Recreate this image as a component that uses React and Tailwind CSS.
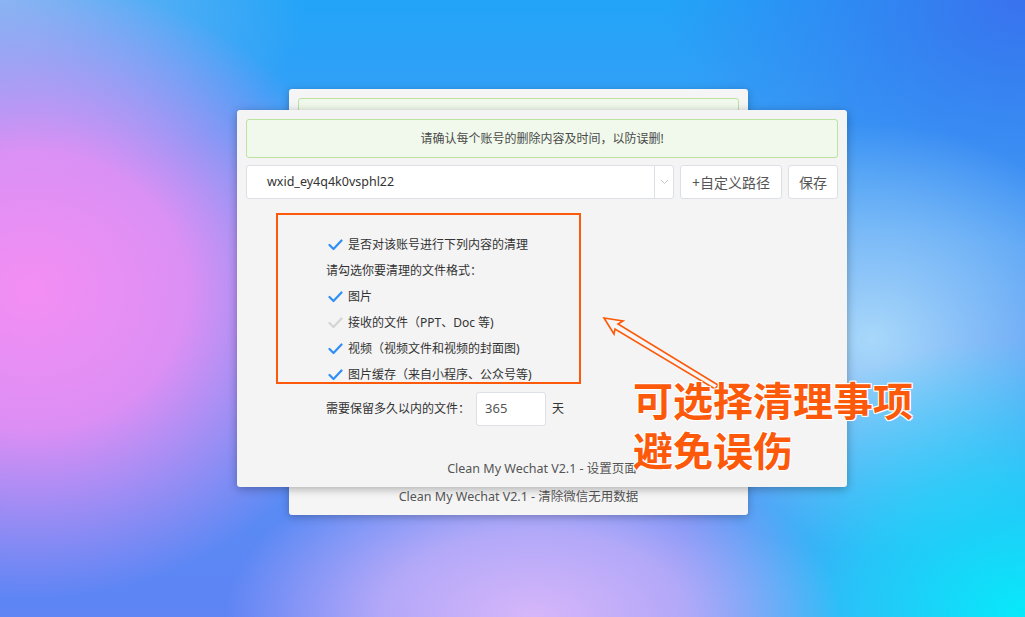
const FONT = "font-['Noto_Sans','Noto_Sans_CJK_SC',sans-serif]";

const ITEMS = [
  { label: '图片', on: true },
  { label: '接收的文件（PPT、Doc 等)', on: false },
  { label: '视频（视频文件和视频的封面图)', on: true },
  { label: '图片缓存（来自小程序、公众号等)', on: true },
];

function Check({ on }) {
  return (
    <svg width="15" height="12" viewBox="0 0 15 12" className="shrink-0">
      <polyline
        points="1.5,6 5.5,10 13.5,1.5"
        fill="none"
        stroke={on ? '#2f8ff5' : '#d4d4d4'}
        strokeWidth="2.2"
        strokeLinecap="round"
        strokeLinejoin="round"
      />
    </svg>
  );
}

function Row({ on, label }) {
  return (
    <div className="flex items-center h-[26px] ml-[2px] gap-[5px] text-[12px] text-[#333]">
      <Check on={on} />
      <span>{label}</span>
    </div>
  );
}

export default function App() {
  return (
    <div
      className={`relative w-[1025px] h-[617px] overflow-hidden ${FONT} bg-[radial-gradient(ellipse_34%_50%_at_3%_47%,#f48ef4_0%,rgba(244,142,244,0.85)_45%,rgba(244,142,244,0)_100%),radial-gradient(ellipse_30%_28%_at_52%_100%,#d6b6fa_0%,rgba(214,182,250,0.7)_50%,rgba(214,182,250,0)_100%),radial-gradient(ellipse_35%_45%_at_100%_100%,#06eafa_0%,rgba(6,234,250,0.6)_50%,rgba(6,234,250,0)_100%),radial-gradient(ellipse_25%_35%_at_85%_55%,#a8d8fa_0%,rgba(168,216,250,0)_100%),radial-gradient(ellipse_35%_40%_at_100%_0%,#3a72ee_0%,rgba(58,114,238,0)_100%),radial-gradient(ellipse_30%_30%_at_0%_0%,#80b8f2_0%,rgba(128,184,242,0)_100%),linear-gradient(180deg,#22a4f8_0%,#4c9af4_40%,#5f84f4_100%)]`}
    >
      {/* back window */}
      <div className="absolute left-[289px] top-[89px] w-[459px] h-[426px] bg-[#f5f5f5] rounded-[3px] shadow-[0_2px_8px_rgba(0,0,0,0.25)] flex flex-col p-[9px]">
        <div className="h-[40px] border border-[#b9e39f] bg-[#f0f9eb] rounded-[3px]" />
        <div className="mt-auto text-center text-[12.5px] leading-[18px] text-[#555]">
          Clean My Wechat V2.1 - 清除微信无用数据
        </div>
      </div>

      {/* front window */}
      <div className="absolute left-[237px] top-[110px] w-[610px] h-[377px] bg-[#f4f4f4] rounded-[3px] shadow-[0_2px_10px_rgba(0,0,0,0.3)] flex flex-col p-[9px]">
        <div className="h-[39px] border border-[#b9e39f] bg-[#f0f9eb] rounded-[3px] flex items-center justify-center text-[12px] text-[#4a4a4a]">
          请确认每个账号的删除内容及时间，以防误删!
        </div>

        <div className="mt-[7px] h-[34px] flex gap-[6px]">
          <div className="flex-1 flex bg-white border border-[#dcdfe6] rounded-[3px]">
            <div className="flex-1 flex items-center pl-[20px] text-[12.5px] text-[#333]">wxid_ey4q4k0vsphl22</div>
            <div className="w-[19px] border-l border-[#dcdfe6] flex items-center justify-center">
              <svg width="9" height="6" viewBox="0 0 9 6">
                <polyline points="1,1 4.5,4.5 8,1" fill="none" stroke="#c0c4cc" strokeWidth="1" />
              </svg>
            </div>
          </div>
          <div className="w-[102px] bg-white border border-[#dcdfe6] rounded-[3px] flex items-center justify-center text-[14px] text-[#555]">
            +自定义路径
          </div>
          <div className="w-[50px] bg-white border border-[#dcdfe6] rounded-[3px] flex items-center justify-center text-[14px] text-[#555]">
            保存
          </div>
        </div>

        <div className="mt-[33px] pl-[80px] flex flex-col">
          <Row on label="是否对该账号进行下列内容的清理" />
          <div className="h-[26px] flex items-center text-[12px] text-[#333]">请勾选你要清理的文件格式：</div>
          {ITEMS.map(i => (
            <Row key={i.label} on={i.on} label={i.label} />
          ))}
          <div className="mt-[4px] flex items-center h-[34px] text-[12px] text-[#333]">
            <span>需要保留多久以内的文件：</span>
            <div className="ml-[6px] w-[70px] h-[34px] bg-white border border-[#dcdfe6] rounded-[3px] flex items-center pl-[8px] text-[13px] text-[#555]">
              365
            </div>
            <span className="ml-[6px]">天</span>
          </div>
        </div>

        <div className="mt-auto text-center text-[12.5px] leading-[18px] text-[#555]">
          Clean My Wechat V2.1 - 设置页面
        </div>

        {/* highlight box */}
        <div className="absolute left-[39px] top-[103px] w-[305px] h-[171px] border-2 border-[#fc5a0a]" />
      </div>

      {/* arrow */}
      <svg className="absolute left-0 top-0 pointer-events-none" width="1025" height="617">
        <polygon
          points="604,318 623,321 618,324 718,385 715,389 615,329 614,334"
          fill="#f6f6f6"
          stroke="#fc5a0a"
          strokeWidth="1.6"
          strokeLinejoin="miter"
        />
      </svg>

      {/* annotation */}
      <div className="absolute left-[633px] top-[376px] text-[40px] leading-[50px] font-bold text-[#fc5a0a] [text-shadow:0_0_2px_#fff,1px_1px_0_#fff,-1px_-1px_0_#fff,1px_-1px_0_#fff,-1px_1px_0_#fff]">
        <div>可选择清理事项</div>
        <div>避免误伤</div>
      </div>
    </div>
  );
}
